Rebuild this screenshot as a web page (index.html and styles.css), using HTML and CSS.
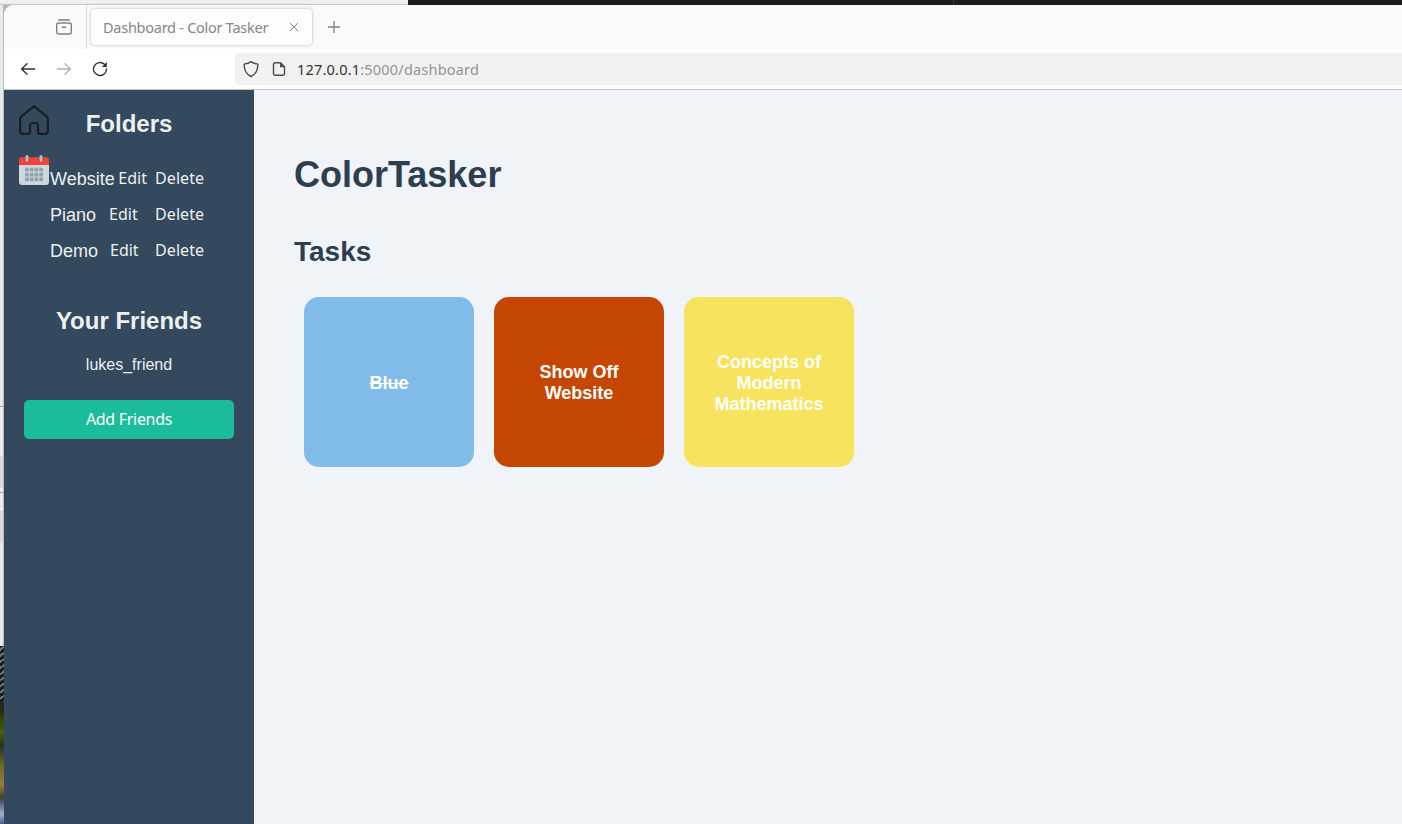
FILE: index.html
```html
<!DOCTYPE html>
<html lang="en">
<head>
<meta charset="utf-8">
<title>Dashboard - Color Tasker</title>
<link rel="stylesheet" href="styles.css">
</head>
<body>
<div class="desktop-top"><div class="top-light"></div><div class="top-dark"></div><div class="top-dark-end"></div></div>
<div class="desktop">
  <div class="desktop-left"><div class="left-windows"></div><div class="left-wallpaper"></div></div>
  <div class="window">
    <header class="tabbar">
      <div class="tab-overview">
        <svg width="18" height="18" viewBox="0 0 18 18" fill="none" stroke="#808080" stroke-width="1.4" stroke-linecap="round"><path d="M3.700 2h10.600"/><rect x="1.700" y="5" width="14.600" height="11" rx="2"/><path d="M7.300 9.300h3.400"/></svg>
      </div>
      <div class="tab"><span class="tab-title">Dashboard - Color Tasker</span>
        <svg width="10" height="10" viewBox="0 0 10 10" fill="none" stroke="#858585" stroke-width="1"><path d="M1 1l8 8M9 1L1 9"/></svg>
      </div>
      <svg class="new-tab" width="14" height="14" viewBox="0 0 14 14" fill="none" stroke="#808080" stroke-width="1.300"><path d="M7 1v12M1 7h12"/></svg>
    </header>
    <nav class="toolbar">
      <svg class="nav-icon" width="16" height="16" viewBox="0 0 16 16" fill="none" stroke="#333" stroke-width="1.4" stroke-linecap="round" stroke-linejoin="round"><path d="M14.600 8H1.600M7 2.800L1.600 8 7 13.200"/></svg>
      <svg class="nav-icon" width="16" height="16" viewBox="0 0 16 16" fill="none" stroke="#b0b0b0" stroke-width="1.4" stroke-linecap="round" stroke-linejoin="round"><path d="M1.400 8h13M9 2.800L14.400 8 9 13.200"/></svg>
      <svg class="nav-icon" width="16" height="16" viewBox="0 0 16 16" fill="none" stroke="#333" stroke-width="1.4" stroke-linecap="round"><path d="M12.400 3.200A6.500 6.500 0 1 0 14.500 8"/><path d="M14.900.9v5h-5z" fill="#333" stroke="none"/></svg>
      <div class="address">
        <svg width="16" height="18" viewBox="0 0 16 18" fill="none" stroke="#4a4a4a" stroke-width="1.4" stroke-linejoin="round"><path d="M8 1.600c2 1.400 4 2.100 6.200 2.300.6 0 .7.400.7.800-.2 6-2.600 9.800-6.900 11.800C3.700 14.500 1.300 10.700 1.100 4.700c0-.4.1-.8.700-.8C4 3.700 6 3 8 1.600z"/></svg>
        <svg class="page-icon" width="14" height="16" viewBox="0 0 14 16" fill="none" stroke="#4a4a4a" stroke-width="1.4" stroke-linejoin="round"><path d="M8.500 1.700H3a1.500 1.500 0 0 0-1.500 1.500v9.600A1.500 1.500 0 0 0 3 14.300h8a1.500 1.500 0 0 0 1.500-1.500V5.700z"/><path d="M8 1.200v5h5z" fill="#4a4a4a" stroke="none"/></svg>
        <span class="url"><b>127.0.0.1</b>:5000/dashboard</span>
      </div>
    </nav>
    <div class="page">
      <aside class="sidebar">
        <div class="shortcuts">
          <svg width="30" height="30" viewBox="0 0 30 30" fill="none" stroke="#1c1e20" stroke-width="2.200" stroke-linejoin="round"><path d="M15 1.200L2.300 11.600Q1.100 12.700 1.100 14.400V26a2.900 2.900 0 0 0 2.900 2.900h5a2 2 0 0 0 2-2v-6.400a2.500 2.500 0 0 1 2.500-2.500h3a2.500 2.500 0 0 1 2.500 2.500v6.400a2 2 0 0 0 2 2h5a2.900 2.900 0 0 0 2.900-2.900V14.400Q28.900 12.700 27.700 11.600z"/></svg>
          <svg width="30" height="30" viewBox="0 0 30 30"><path d="M0 9h30v18a3 3 0 0 1-3 3H3a3 3 0 0 1-3-3z" fill="#cfd8dc"/><path d="M0 10V5.200a3 3 0 0 1 3-3h24a3 3 0 0 1 3 3V10z" fill="#f44336"/><g fill="#c93a30"><circle cx="8" cy="5" r="2.500"/><circle cx="22" cy="5" r="2.500"/></g><g fill="#b0bec5"><rect x="6.500" y="0" width="3" height="7" rx="1.500"/><rect x="20.500" y="0" width="3" height="7" rx="1.500"/></g><path d="M6 14.700h18M6 19.600h18M6 24.400h18" stroke="#90a4ae" stroke-width="3.700" stroke-dasharray="3.800 .95"/></svg>
        </div>
        <h2>Folders</h2>
        <ul class="folders">
          <li><span>Website</span><a class="edit">Edit</a><a class="delete">Delete</a></li>
          <li><span>Piano</span><a class="edit">Edit</a><a class="delete">Delete</a></li>
          <li><span>Demo</span><a class="edit">Edit</a><a class="delete">Delete</a></li>
        </ul>
        <h2 class="friends-title">Your Friends</h2>
        <p class="friend">lukes_friend</p>
        <button class="add">Add Friends</button>
      </aside>
      <main class="content">
        <h1>ColorTasker</h1>
        <h2>Tasks</h2>
        <div class="tasks">
          <div class="task blue done">Blue</div>
          <div class="task orange">Show Off Website</div>
          <div class="task yellow">Concepts of Modern Mathematics</div>
        </div>
      </main>
    </div>
  </div>
</div>
</body>
</html>
```
FILE: styles.css
```css
* { box-sizing: border-box; }
body { margin: 0; height: 824px; overflow: hidden; display: flex; flex-direction: column; font-family: "Liberation Sans", Arial, sans-serif; }
svg { display: block; flex: none; }
h1, h2, p, ul { margin: 0; padding: 0; }

.desktop-top { height: 5px; display: flex; flex: none; }
.top-light { width: 408px; background: linear-gradient(#f0f0f0 0 3px, #dedede 4px, #b8b8b8 5px); }
.top-dark { width: 546px; background: #1c1d20; border-right: 1px solid #393b3d; }
.top-dark-end { flex: 1; background: #1c1d20; }
.desktop { flex: 1; display: flex; min-height: 0; background: linear-gradient(90deg, #e8e8e8 0 3px, #b5b5b5 3px 30px); }
.desktop-left { width: 4px; display: flex; flex-direction: column; }
.left-windows { height: 641px; border-right: 1px solid #b9bbbb; background: linear-gradient(#e7eaea 0 401px, #a5a5a5 401px 402px, #eceeee 402px 451px, #d9dbdb 451px 483px, #eceeee 483px 487px, #a5a5a5 487px 488px, #eceeee 488px 506px, #d9dbdb 506px 538px, #e7eaea 538px); }
.left-wallpaper { flex: 1; background: repeating-linear-gradient(145deg, #171b18e0 0 2px, #8e9490b0 2px 4px, #171b1800 4px 5px) 0 0 / 100% 56px no-repeat, linear-gradient(#252b23 0 55px, #222b0e 64px, #4b5d0d 86px, #28321b 100px, #71672b 119px, #927e34 139px, #413f2d 152px, #5b6992 158px, #a5afc8 168px, #4b5d8a 178px); }
.window { flex: 1; display: flex; flex-direction: column; border-top-left-radius: 10px; overflow: hidden; background: #fff; }

.tabbar { height: 44px; display: flex; align-items: center; background: #fafafa; font-family: "Noto Sans", sans-serif; }
.tab-overview { width: 83px; height: 44px; padding: 13px 14px 0 51px; border-right: 1px solid #d9d9d9; }
.tab { flex: none; width: 221px; height: 36px; margin-left: 4px; padding: 0 13px 0 12px; display: flex; align-items: center; justify-content: space-between; border-radius: 4px; background: #fdfdfd; box-shadow: 0 0 3px #0000004d; }
.tab-title { font-size: 14.500px; letter-spacing: -0.260px; color: #868686; white-space: nowrap; }
.new-tab { margin-left: 15px; }
.toolbar { height: 41px; display: flex; align-items: center; gap: 20px; padding-left: 16px; border-bottom: 1px solid #c4c4c4; background: #fff; }
.address { flex: 1; height: 32px; margin-left: 107px; padding-left: 8px; display: flex; align-items: center; background: #f1f1f1; border-radius: 4px 0 0 4px; }
.page-icon { margin-left: 13px; }
.url { margin-left: 11px; font: 14.500px "Noto Sans", sans-serif; letter-spacing: 0.200px; color: #949494; white-space: nowrap; }
.url b { font-weight: 400; color: #333; }

.page { flex: 1; display: flex; min-height: 0; background: #f0f3f8; }
.sidebar { position: relative; width: 250px; padding: 20px; background: #34495e; color: #ecf0f1; }
.sidebar h2 { font-size: 24px; line-height: 28px; text-align: center; }
.shortcuts { position: absolute; left: 15px; top: 15px; display: grid; gap: 20px; }
.folders { list-style: none; width: 154px; margin: 22px 0 0 26px; }
.folders li { height: 36px; display: flex; align-items: center; justify-content: space-between; font-size: 18px; }
.folders span { padding-top: 2px; }
.folders a { font: 16px/22px "Noto Sans", sans-serif; }
.edit { width: 29px; margin-right: 4px; }
.folders .delete { width: 49px; letter-spacing: 0.100px; }
.sidebar .friends-title { margin-top: 39px; }
.friend { margin-top: 20px; text-align: center; font-size: 16px; line-height: 20px; }
.add { display: block; width: 210px; height: 39px; margin-top: 25px; padding: 0 0 2px; border: 0; border-radius: 5px; background: #1abc9c; color: #fff; font: 16px "Noto Sans", sans-serif; letter-spacing: -0.300px; }
.content { flex: 1; padding: 64px 40px 0; color: #2c3e50; }
.content h1 { font-size: 36px; line-height: 42px; }
.content h2 { margin-top: 40px; font-size: 28px; line-height: 32px; }
.tasks { display: flex; gap: 20px; padding: 29px 10px 0; }
.task { width: 170px; height: 170px; padding: 12px 25px 10px; display: flex; align-items: center; justify-content: center; text-align: center; border-radius: 15px; color: #fff; font-size: 18px; font-weight: 700; line-height: 21px; }
.blue { background: #80bce7; }
.orange { background: #c54600; }
.yellow { background: #f7e35d; }
.done { text-decoration: line-through; text-decoration-skip-ink: none; }
```
